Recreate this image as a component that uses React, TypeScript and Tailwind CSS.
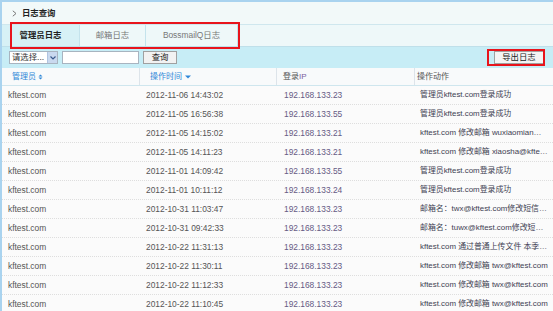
import React from "react";

const rows: [string, string, string, React.ReactNode][] = [
  ["kftest.com", "2012-11-06 14:43:02", "192.168.133.23", "管理员kftest.com登录成功"],
  ["kftest.com", "2012-11-05 16:56:38", "192.168.133.55", "管理员kftest.com登录成功"],
  ["kftest.com", "2012-11-05 14:15:02", "192.168.133.21", "kftest.com 修改邮箱 wuxiaomian…"],
  ["kftest.com", "2012-11-05 14:11:23", "192.168.133.21", "kftest.com 修改邮箱 xiaosha@kfte…"],
  ["kftest.com", "2012-11-01 14:09:42", "192.168.133.55", "管理员kftest.com登录成功"],
  ["kftest.com", "2012-11-01 10:11:12", "192.168.133.24", "管理员kftest.com登录成功"],
  ["kftest.com", "2012-10-31 11:03:47", "192.168.133.23", "邮箱名：twx@kftest.com修改短信…"],
  ["kftest.com", "2012-10-31 09:42:33", "192.168.133.23", "邮箱名：tuwx@kftest.com修改短…"],
  ["kftest.com", "2012-10-22 11:31:13", "192.168.133.23", "kftest.com 通过普通上传文件 本季…"],
  ["kftest.com", "2012-10-22 11:30:11", "192.168.133.23", "kftest.com 修改邮箱 twx@kftest.com"],
  ["kftest.com", "2012-10-22 11:12:33", "192.168.133.23", "kftest.com 修改邮箱 twx@kftest.com"],
  ["kftest.com", "2012-10-22 11:10:45", "192.168.133.23", "kftest.com 修改邮箱 twx@kftest.com"],
];

export default function App() {
  return (
    <div className="relative w-[553px] h-[311px] overflow-hidden bg-[#f2f9f9] border-t-2 border-l-2 border-[#a9d3ef] font-['Liberation_Sans','Noto_Sans_CJK_SC',sans-serif] text-[8.4px] leading-none text-[#444]">
      {/* title */}
      <div className="h-[23px] flex items-center pl-[10px] border-b border-[#cfe7ee]">
        <svg width="5" height="7" viewBox="0 0 5 7" className="mr-[5px]">
          <path d="M0.8 0.8 L4 3.5 L0.8 6.2" fill="none" stroke="#777" strokeWidth="1" />
        </svg>
        <span className="font-bold text-[#222]">日志查询</span>
      </div>
      {/* tabs */}
      <div className="h-[22px] flex border-b border-[#bfe0ea] bg-[#eef8f9]">
        <div className="w-[78px] flex items-center justify-center bg-[#d7f1f6] border-r border-[#c4e3ec] font-bold text-[#222]">
          管理员日志
        </div>
        <div className="w-[66px] flex items-center justify-center border-r border-[#c4e3ec] text-[#777]">
          邮箱日志
        </div>
        <div className="w-[92px] flex items-center justify-center border-r border-[#c4e3ec] text-[#777]">
          BossmailQ日志
        </div>
      </div>
      {/* toolbar */}
      <div className="h-[21px] flex items-center bg-[#c7edf6] pl-[7px] pr-[9px]">
        <div className="w-[49px] h-[13px] flex items-center bg-white border border-[#a8b4c0]">
          <span className="flex-1 pl-[2px] text-[#333] overflow-hidden whitespace-nowrap">请选择...</span>
          <div className="w-[10px] h-full flex items-center justify-center bg-[#c9d9ef] border-l border-[#b0c4e0]">
            <svg width="6" height="4" viewBox="0 0 6 4">
              <path d="M0.5 0.5 L3 3 L5.5 0.5" fill="none" stroke="#3a5a8c" strokeWidth="1.2" />
            </svg>
          </div>
        </div>
        <div className="ml-[4px] w-[77px] h-[13px] bg-white border border-[#a8b4c0]" />
        <div className="ml-[4px] w-[34px] h-[13px] flex items-center justify-center bg-[#f2f2f2] border border-[#a0a0a0] text-[#222]">
          查询
        </div>
        <div className="flex-1" />
        <div className="w-[50px] h-[13px] flex items-center justify-center bg-[#f4f4f4] border border-[#a0a0a0] text-[#222]">
          导出日志
        </div>
      </div>
      {/* header */}
      <div className="h-[18px] flex bg-[#f8fafb] border-b border-[#cfe6ee] text-[8px]">
        <div className="w-[138px] flex items-center pl-[10px] border-r border-[#dde4ea] text-[#2f87d8]">
          管理员
          <svg width="5" height="6" viewBox="0 0 5 6" className="ml-[2px]">
            <path d="M2.5 0.5 L4.5 2.6 L0.5 2.6 Z M2.5 5.5 L4.5 3.4 L0.5 3.4 Z" fill="#2f87d8" />
          </svg>
        </div>
        <div className="w-[137px] flex items-center pl-[10px] border-r border-[#dde4ea] text-[#2f87d8]">
          操作时间
          <svg width="6" height="4" viewBox="0 0 6 4" className="ml-[3px]">
            <path d="M0 0.5 L6 0.5 L3 3.5 Z" fill="#2f87d8" />
          </svg>
        </div>
        <div className="w-[138px] flex items-center pl-[6px] border-r border-[#dde4ea] text-[#555]">
          登录<span className="text-[#7a5fa0]">IP</span>
        </div>
        <div className="flex-1 flex items-center pl-[2px] text-[#555]">操作动作</div>
      </div>
      {/* rows */}
      <div className="bg-[#fbfbfb]">
        {rows.map((r, i) => (
          <div key={i} className="h-[19px] flex items-center border-b border-dotted border-[#dedede]">
            <div className="w-[138px] pl-[6px] text-[#555]">{r[0]}</div>
            <div className="w-[137px] pl-[6px] text-[#555]">{r[1]}</div>
            <div className="w-[138px] pl-[7px] text-[#665a84]">{r[2]}</div>
            <div className="flex-1 pl-[5px] whitespace-nowrap text-[7.9px] text-[#3e3e52]">{r[3]}</div>
          </div>
        ))}
      </div>
      {/* red annotation boxes */}
      <div className="absolute left-[8px] top-[20px] w-[230px] h-[27px] border-2 border-[#e8141c]" />
      <div className="absolute left-[485px] top-[47px] w-[58px] h-[17px] border-2 border-[#e8141c]" />
    </div>
  );
}
